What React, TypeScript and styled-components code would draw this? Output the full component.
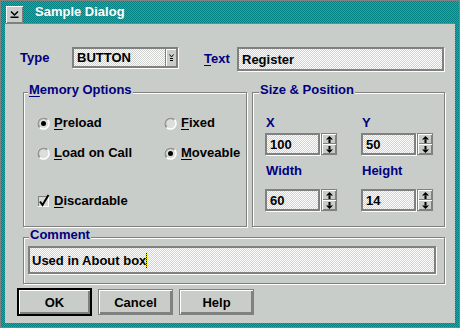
import React from "react";
import styled, { createGlobalStyle, css } from "styled-components";

const FACE = "#c9cdc9";
const SHADOW = "#808080";
const NAVY = "#000080";

const checker = (a: string, b: string) =>
  `linear-gradient(45deg, ${b} 37.5%, ${a} 37.5%, ${a} 62.5%, ${b} 62.5%) 0 0 / 2px 2px`;

const GlobalStyle = createGlobalStyle`
  html, body { margin: 0; padding: 0; background: #ffffff; }
  body {
    font-family: "Liberation Sans", Arial, sans-serif;
    font-size: 13px;
    font-weight: bold;
    color: #000;
  }
  * { box-sizing: border-box; }
`;

const Window = styled.div`
  width: 460px;
  height: 328px;
  border: 1px solid ${SHADOW};
  background: ${checker("#008080", SHADOW)};
  padding: 0 4px 4px;
  display: flex;
  flex-direction: column;
`;

const TitleBar = styled.div`
  height: 23px;
  flex-shrink: 0;
  border-bottom: 1px solid ${SHADOW};
  display: flex;
  align-items: flex-end;
`;

const SysMenuButton = styled.div`
  width: 17px;
  height: 17px;
  margin-left: 1px;
  background: ${FACE};
  box-shadow: inset 1px 1px 0 #fff, inset -1px -1px 0 ${SHADOW};
  display: flex;
  align-items: center;
  justify-content: center;
`;

const TitleText = styled.div`
  color: #fff;
  line-height: 22px;
  margin-left: 12px;
  align-self: flex-start;
`;

const Client = styled.div`
  flex: 1;
  background: ${FACE};
  padding: 23px 10px 0 12px;
  display: flex;
  flex-direction: column;
`;

const TopRow = styled.div`
  display: flex;
  align-items: flex-start;
  margin-left: 3px;
`;

const FieldPair = styled.div<{ $h: number; $ml?: number }>`
  display: flex;
  align-items: center;
  height: ${(p) => p.$h}px;
  margin-left: ${(p) => p.$ml ?? 0}px;
`;

const FieldLabel = styled.span<{ $w: number }>`
  color: ${NAVY};
  width: ${(p) => p.$w}px;
  line-height: 16px;
`;

const Field = styled.div<{ $w: number; $h: number; $pad?: number }>`
  width: ${(p) => p.$w}px;
  height: ${(p) => p.$h}px;
  border: 2px solid ${SHADOW};
  box-shadow: 1px 1px 0 #fff;
  background: ${checker("#ffffff", "#cfd2cf")};
  padding-left: ${(p) => p.$pad ?? 2}px;
  display: flex;
  align-items: center;
  white-space: nowrap;
`;

const ComboFrame = styled.div`
  width: 106px;
  height: 21px;
  border: 2px solid ${SHADOW};
  box-shadow: 1px 1px 0 #fff;
  display: flex;
`;

const ComboEntry = styled.div`
  flex: 1;
  background: ${checker("#ffffff", "#cfd2cf")};
  padding-left: 3px;
  display: flex;
  align-items: center;
`;

const ComboButton = styled.div`
  width: 11px;
  border-left: 1px solid ${SHADOW};
  background: ${FACE};
  box-shadow: inset 1px 1px 0 #fff;
  display: flex;
  align-items: center;
  justify-content: center;
`;

const Mn = styled.span`
  text-decoration: underline;
  text-decoration-thickness: 1px;
  text-underline-offset: 2px;
  text-decoration-skip-ink: none;
`;

const GroupsRow = styled.div<{ $mt: number }>`
  display: flex;
  gap: 5px;
  margin: ${(p) => p.$mt}px 0 0 6px;
`;

const Group = styled.fieldset<{ $w: number; $h?: number }>`
  margin: 0;
  padding: 0;
  min-width: 0;
  width: ${(p) => p.$w}px;
  ${(p) =>
    p.$h !== undefined &&
    css`
      height: ${p.$h}px;
    `}
  border: 1px solid ${SHADOW};
  box-shadow: inset 1px 1px 0 #fff, 1px 1px 0 #fff;
`;

const Legend = styled.legend<{ $x: number }>`
  margin-left: ${(p) => p.$x}px;
  padding: 0 1px 4px;
  line-height: 12px;
  color: ${NAVY};
  background: ${FACE};
`;

const MemoryGrid = styled.div`
  display: grid;
  grid-template-columns: 127px auto;
  row-gap: 14px;
  padding: 15px 0 0 13px;
`;

const Option = styled.label<{ $mt?: number }>`
  display: flex;
  align-items: center;
  gap: 4px;
  height: 16px;
  line-height: 16px;
  margin-top: ${(p) => p.$mt ?? 0}px;
`;

const CheckRow = styled.div`
  padding-left: 13px;
`;

const SizeGrid = styled.div`
  display: grid;
  grid-template-columns: 96px auto;
  row-gap: 9px;
  padding: 16px 0 0 12px;
`;

const SpinCell = styled.div<{ $gap: number }>`
  display: flex;
  flex-direction: column;
  gap: ${(p) => p.$gap}px;
`;

const CellLabel = styled.span`
  color: ${NAVY};
  line-height: 14px;
  padding-left: 1px;
`;

const SpinRow = styled.div`
  display: flex;
  gap: 1px;
`;

const SpinButtons = styled.div`
  width: 16px;
  height: 22px;
  border: 1px solid ${SHADOW};
  display: flex;
  flex-direction: column;
`;

const SpinBtn = styled.div`
  flex: 1;
  background: ${FACE};
  box-shadow: inset 1px 1px 0 #fff, inset -1px -1px 0 ${SHADOW};
  display: flex;
  align-items: center;
  justify-content: center;
`;

const CommentBody = styled.div`
  padding: 1px 0 9px 4px;
`;

const Cursor = styled.span`
  display: inline-block;
  width: 1px;
  height: 15px;
  vertical-align: middle;
  background: repeating-linear-gradient(#000 0 1px, #e8e800 1px 2px);
`;

const ButtonRow = styled.div`
  display: flex;
  align-items: center;
  gap: 6px;
  margin-top: 4px;
`;

const PushButton = styled.button<{ $default?: boolean }>`
  width: 75px;
  height: 26px;
  padding: 0;
  font: inherit;
  color: #000;
  background: ${FACE};
  border: 1px solid ${SHADOW};
  box-shadow: inset 1px 1px 0 #fff, inset -2px -2px 0 ${SHADOW};
  ${(p) =>
    p.$default &&
    css`
      height: 28px;
      border: 2px solid #000;
    `}
`;

const SysGlyph = () => (
  <svg width="9" height="7" viewBox="0 0 9 7">
    <path d="M1 0.5 L4.5 4 L8 0.5" fill="none" stroke="#000" strokeWidth="1.5" />
    <rect x="0.5" y="5.5" width="8" height="1.5" fill="#000" />
  </svg>
);

const ComboGlyph = () => (
  <svg width="5" height="7" viewBox="0 0 5 7">
    <path d="M0.5 0.5 L2.5 3 L4.5 0.5" fill="none" stroke="#000" strokeWidth="1" />
    <rect x="1" y="4" width="3" height="1" fill="#000" />
    <rect x="1" y="6" width="3" height="1" fill="#000" />
  </svg>
);

const Arrow = ({ down }: { down?: boolean }) => (
  <svg width="7" height="7" viewBox="0 0 7 7" style={down ? { transform: "rotate(180deg)" } : undefined}>
    <path d="M3.5 0 L7 3.5 L0 3.5 Z" fill="#000" />
    <rect x="2.5" y="3.5" width="2" height="3.5" fill="#000" />
  </svg>
);

const Radio = ({ checked }: { checked?: boolean }) => (
  <svg width="13" height="13" viewBox="0 0 13 13">
    <circle cx="6.5" cy="6.5" r="6.3" fill="#fff" />
    <path d="M2.05 10.95 A6.3 6.3 0 0 1 10.95 2.05 Z" fill={SHADOW} />
    <circle cx="6.5" cy="6.5" r="4.8" fill="#dcdedc" />
    <path d="M3.1 9.9 A4.8 4.8 0 0 1 9.9 3.1" fill="none" stroke="#a0a0a0" strokeWidth="1" />
    {checked && <circle cx="6.5" cy="6.5" r="2.5" fill="#000" />}
  </svg>
);

const CheckBox = ({ checked }: { checked?: boolean }) => (
  <svg width="13" height="14" viewBox="0 0 13 14">
    <rect x="1" y="2" width="11" height="11" fill="#fff" />
    <rect x="1" y="2" width="10" height="10" fill={SHADOW} />
    <rect x="2" y="3" width="9" height="9" fill="#d8dad8" />
    {checked && (
      <path d="M3 7.5 L5.5 11 L11.5 1" fill="none" stroke="#000" strokeWidth="2" />
    )}
  </svg>
);

const SpinField = ({ label, value, gap }: { label: string; value: string; gap: number }) => (
  <SpinCell $gap={gap}>
    <CellLabel>{label}</CellLabel>
    <SpinRow>
      <Field $w={55} $h={22} $pad={3}>
        {value}
      </Field>
      <SpinButtons>
        <SpinBtn>
          <Arrow />
        </SpinBtn>
        <SpinBtn>
          <Arrow down />
        </SpinBtn>
      </SpinButtons>
    </SpinRow>
  </SpinCell>
);

export default function App() {
  return (
    <>
      <GlobalStyle />
      <Window>
        <TitleBar>
          <SysMenuButton>
            <SysGlyph />
          </SysMenuButton>
          <TitleText>Sample Dialog</TitleText>
        </TitleBar>
        <Client>
          <TopRow>
            <FieldPair $h={21}>
              <FieldLabel $w={52}>Type</FieldLabel>
              <ComboFrame>
                <ComboEntry>BUTTON</ComboEntry>
                <ComboButton>
                  <ComboGlyph />
                </ComboButton>
              </ComboFrame>
            </FieldPair>
            <FieldPair $h={24} $ml={26}>
              <FieldLabel $w={33}>
                <Mn>T</Mn>ext
              </FieldLabel>
              <Field $w={207} $h={24} $pad={3}>
                Register
              </Field>
            </FieldPair>
          </TopRow>

          <GroupsRow $mt={13}>
            <Group $w={224} $h={143}>
              <Legend $x={4}>
                <Mn>M</Mn>emory Options
              </Legend>
              <MemoryGrid>
                <Option>
                  <Radio checked />
                  <span>
                    <Mn>P</Mn>reload
                  </span>
                </Option>
                <Option>
                  <Radio />
                  <span>
                    <Mn>F</Mn>ixed
                  </span>
                </Option>
                <Option>
                  <Radio />
                  <span>
                    <Mn>L</Mn>oad on Call
                  </span>
                </Option>
                <Option>
                  <Radio checked />
                  <span>
                    <Mn>M</Mn>oveable
                  </span>
                </Option>
              </MemoryGrid>
              <CheckRow>
                <Option $mt={32}>
                  <CheckBox checked />
                  <span>
                    <Mn>D</Mn>iscardable
                  </span>
                </Option>
              </CheckRow>
            </Group>
            <Group $w={193} $h={143}>
              <Legend $x={6}>Size &amp; Position</Legend>
              <SizeGrid>
                <SpinField label="X" value="100" gap={3} />
                <SpinField label="Y" value="50" gap={3} />
                <SpinField label="Width" value="60" gap={11} />
                <SpinField label="Height" value="14" gap={11} />
              </SizeGrid>
            </Group>
          </GroupsRow>

          <GroupsRow $mt={2}>
            <Group $w={422}>
              <Legend $x={5}>Comment</Legend>
              <CommentBody>
                <Field $w={408} $h={28} $pad={2}>
                  Used in About box
                  <Cursor />
                </Field>
              </CommentBody>
            </Group>
          </GroupsRow>

          <ButtonRow>
            <PushButton $default>OK</PushButton>
            <PushButton>Cancel</PushButton>
            <PushButton>Help</PushButton>
          </ButtonRow>
        </Client>
      </Window>
    </>
  );
}
